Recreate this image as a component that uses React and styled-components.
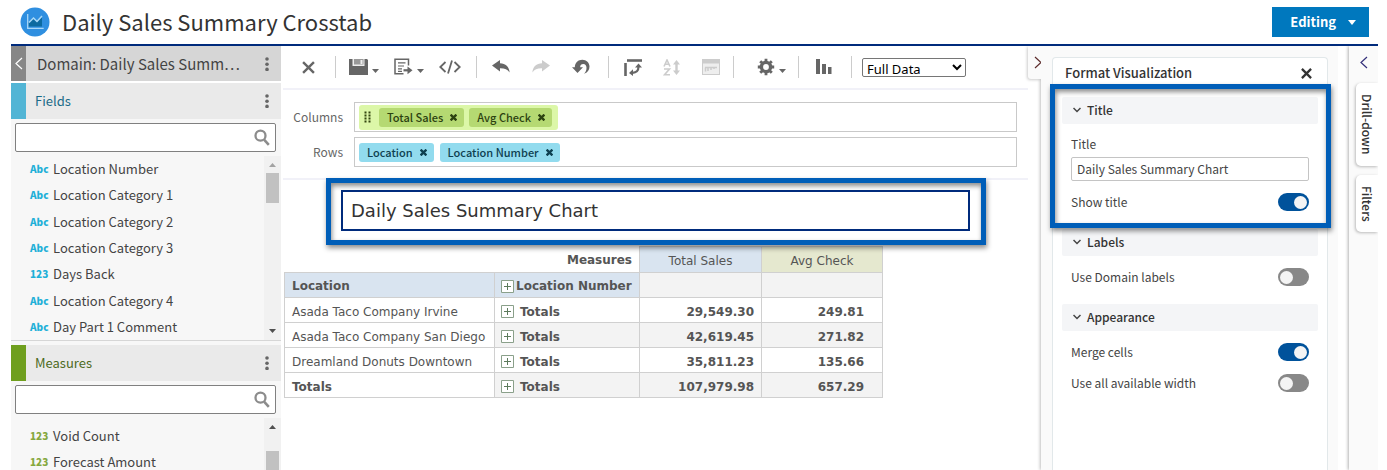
import React, { useState } from 'react';
import styled, { createGlobalStyle } from 'styled-components';

const fields = [
  { type: 'Abc', name: 'Location Number' },
  { type: 'Abc', name: 'Location Category 1' },
  { type: 'Abc', name: 'Location Category 2' },
  { type: 'Abc', name: 'Location Category 3' },
  { type: '123', name: 'Days Back' },
  { type: 'Abc', name: 'Location Category 4' },
  { type: 'Abc', name: 'Day Part 1 Comment' },
];

const measures = [
  { type: '123', name: 'Void Count' },
  { type: '123', name: 'Forecast Amount' },
];

const rows = [
  { location: 'Asada Taco Company Irvine', sales: '29,549.30', check: '249.81' },
  { location: 'Asada Taco Company San Diego', sales: '42,619.45', check: '271.82' },
  { location: 'Dreamland Donuts Downtown', sales: '35,811.23', check: '135.66' },
  { location: 'Totals', sales: '107,979.98', check: '657.29', total: true },
];

const LogoIcon = () => (
  <svg width="30" height="30" viewBox="0 0 30 30">
    <circle cx="15" cy="15" r="14.5" fill="#2f8fe0" />
    <path d="M8.500 19.500v-4l4.500-4 3.500 3.500 5.500-5v9.500z" fill="#0c6aa0" />
    <path d="M7.700 7v14.300h16" fill="none" stroke="#a9d8f7" strokeWidth="1.300" />
    <path d="M9 15.500l4.500-4.500 3.500 3.500 5-5.500" fill="none" stroke="#a9d8f7" strokeWidth="1.500" />
  </svg>
);

const Chevron = ({ left }) => (
  <svg width="8" height="13" viewBox="0 0 8 13" fill="none" stroke="currentColor" strokeWidth="1.200">
    <path d={left ? 'M7 1L1 6.500l6 5.500' : 'M1 1l6 5.500L1 12'} />
  </svg>
);

const DownChevron = () => (
  <svg width="8" height="6" viewBox="0 0 8 6" fill="none" stroke="#444" strokeWidth="1.500">
    <path d="M.5 1L4 4.500 7.500 1" />
  </svg>
);

const Dots = () => (
  <svg width="4" height="14" viewBox="0 0 4 14" fill="#666">
    <circle cx="2" cy="2" r="1.800" />
    <circle cx="2" cy="7.200" r="1.800" />
    <circle cx="2" cy="12.400" r="1.800" />
  </svg>
);

const SearchIcon = () => (
  <svg width="16" height="17" viewBox="0 0 16 17" fill="none" stroke="#8c8c8c">
    <circle cx="6.500" cy="6.700" r="5" strokeWidth="2.300" />
    <path d="M10.300 10.800l4.500 5" strokeWidth="2.600" />
  </svg>
);

const Caret = () => (
  <svg width="7" height="18" viewBox="0 0 7 18" fill="#666">
    <path d="M0 11h7L3.500 15z" />
  </svg>
);

const Arrow = ({ up, pale }) => (
  <svg width="7" height="4" viewBox="0 0 7 4" fill={pale ? '#a3a3a3' : '#505050'}>
    <path d={up ? 'M0 4h7L3.500 0z' : 'M0 0h7L3.500 4z'} />
  </svg>
);

const CloseIcon = ({ size = 12, weight = 2 }) => (
  <svg width={size} height={size} viewBox="0 0 12 12" stroke="currentColor" strokeWidth={weight}>
    <path d="M1 1l10 10M11 1L1 11" />
  </svg>
);

const SaveIcon = () => (
  <svg width="19" height="18" viewBox="0 0 19 18">
    <path d="M0 1h18l1 1v15H0z" fill="#666" />
    <path d="M3.500 1h12v7h-12z" fill="#eee" />
    <path d="M5 1h9.500v5.500H5z" fill="#999" />
    <path d="M11.500 2h2v4h-2z" fill="#eee" />
  </svg>
);

const ExportIcon = () => (
  <svg width="19" height="18" viewBox="0 0 19 18" fill="none" stroke="#666" strokeWidth="1.500">
    <path d="M14.500 7.500V1.300H1v14.500h8.500" />
    <path d="M4 4.800h7.500M4 8h6M4 10.800h4M4 13.300h4" strokeWidth="1.200" />
    <path d="M9.500 12.300h5" strokeWidth="2.200" />
    <path d="M13.500 8.500l5 3.800-5 3.900z" fill="#666" stroke="none" />
  </svg>
);

const CodeIcon = () => (
  <svg width="22" height="14" viewBox="0 0 22 14" fill="none" stroke="#666" strokeWidth="1.800">
    <path d="M6.500 2L1.300 7l5.200 5M15.500 2l5.200 5-5.200 5M13 .5L9 13.500" />
  </svg>
);

const UndoIcon = ({ flip }) => (
  <svg width="18" height="14" viewBox="0 0 18 14" fill={flip ? '#ccc' : '#666'}>
    <g transform={flip ? 'matrix(-1 0 0 1 18 0)' : undefined}>
      <path d="M0 5.500L8 0v3.200c5.500.2 9.300 3.500 9.600 9.300-2-3-5-4.300-9.600-4.200v3.200z" />
    </g>
  </svg>
);

const RevertIcon = () => (
  <svg width="18" height="16" viewBox="0 0 18 16" fill="#666">
    <path d="M0 8.300h2.800C3 3.500 6.300.8 10.300.8c4.200 0 7.200 3 7.200 6.800 0 3.500-2 6.200-5.500 7.200 1.800-1.600 2.500-3.600 2.500-6 0-2.700-1.300-3.900-3.200-3.900-2 0-3 .8-3.200 3.400H11L5.500 14z" />
  </svg>
);

const SwitchIcon = () => (
  <svg width="18" height="17" viewBox="0 0 18 17" fill="none" stroke="#666">
    <path d="M1.500 4v13" strokeWidth="2.600" />
    <path d="M3 1.500h15" strokeWidth="2.600" />
    <path d="M8 13.800c4.500.2 6.500-2 6.500-6.300" strokeWidth="2.200" />
    <path d="M11 8.500l3.500-4 3.500 4zM9 10.300l-4 3.700 4 3z" fill="#666" stroke="none" />
  </svg>
);

const SortIcon = () => (
  <svg width="18" height="17" viewBox="0 0 18 17" fill="none" stroke="#ccc" strokeWidth="1.600">
    <path d="M1 7.500L4 1l3 6.500M2 5.300h4M1 10h5.500L1.500 15.700H7" />
    <path d="M13.500 4v9" strokeWidth="2.400" />
    <path d="M10 5.500l3.500-4.500L17 5.500zM10 11.500l3.500 4.500 3.500-4.500z" fill="#ccc" stroke="none" />
  </svg>
);

const PanelIcon = () => (
  <svg width="18" height="16" viewBox="0 0 18 16" fill="none" stroke="#ccc">
    <rect x=".5" y=".5" width="17" height="15" strokeWidth="1" fill="#eee" />
    <path d="M0 2.500h18" strokeWidth="4" />
    <path d="M3.500 12.500V8.500M6 12V8.500M9 11V8.500M12 10V8.500M3 8.500h12" strokeWidth="1.500" />
  </svg>
);

const GearIcon = () => (
  <svg width="18" height="18" viewBox="0 0 18 18" fill="none" stroke="#666">
    <circle cx="9" cy="9" r="4.600" strokeWidth="3.400" />
    {[0, 45, 90, 135].map((deg) => (
      <path key={deg} d="M9 .8v3M9 14.200v3" strokeWidth="2.800" transform={`rotate(${deg} 9 9)`} />
    ))}
  </svg>
);

const BarsIcon = () => (
  <svg width="16" height="16" viewBox="0 0 16 16" fill="#666">
    <path d="M0 0h4v15H0zM6 5h4v10H6zM12 8h3.500v7H12z" />
  </svg>
);

const Grip = () => (
  <svg width="7" height="13" viewBox="0 0 7 13" fill="#33460f">
    {[0, 3, 6, 9].map((y) => (
      <path key={y} d={`M.5 ${y + 0.5}h2v2h-2zM4.500 ${y + 0.5}h2v2h-2z`} />
    ))}
  </svg>
);

const PlusBox = () => (
  <svg width="13" height="13" viewBox="0 0 13 13" fill="#fff" stroke="#8aa08a">
    <path d="M.5.5h12v12H.5z" />
    <path d="M6.500 3v7M3 6.500h7" stroke="#5c7a5c" />
  </svg>
);

function Switch({ label, on }) {
  const [checked, setChecked] = useState(on);
  return (
    <SwitchRow>
      <span>{label}</span>
      <Toggle type="checkbox" checked={checked} onChange={() => setChecked(!checked)} />
    </SwitchRow>
  );
}

function Search({ label }) {
  return (
    <SearchBox>
      <input type="text" aria-label={label} />
      <SearchIcon />
    </SearchBox>
  );
}

export default function App() {
  const [title, setTitle] = useState('Daily Sales Summary Chart');

  return (
    <Page>
      <GlobalStyle />
      <Header>
        <LogoIcon />
        <h1>Daily Sales Summary Crosstab</h1>
        <EditButton>
          Editing
          <svg width="8" height="5" viewBox="0 0 8 5" fill="#fff"><path d="M0 0h8L4 5z" /></svg>
        </EditButton>
      </Header>

      <Body>
        <Sidebar>
          <DomainHead>
            <Collapse><Chevron left /></Collapse>
            <h2>Domain: Daily Sales Summ…</h2>
            <MenuButton><Dots /></MenuButton>
          </DomainHead>
          <SectionHead $accent="#52b5d5" $color="#1b6b88">
            <h3>Fields</h3>
            <MenuButton><Dots /></MenuButton>
          </SectionHead>
          <Search label="Fields" />
          <ListArea $lined>
            <List>
              {fields.map((f) => (
                <li key={f.name}><Type $color="#1fb0d8">{f.type}</Type>{f.name}</li>
              ))}
            </List>
            <Scroll>
              <Arrow up pale />
              <Thumb $size="30px" />
              <Arrow />
            </Scroll>
          </ListArea>
          <SectionHead $accent="#6f9f1e" $color="#4d6b22">
            <h3>Measures</h3>
            <MenuButton><Dots /></MenuButton>
          </SectionHead>
          <Search label="Measures" />
          <ListArea $fill>
            <List>
              {measures.map((m) => (
                <li key={m.name}><Type $color="#86a83f">{m.type}</Type>{m.name}</li>
              ))}
            </List>
            <Scroll>
              <Arrow up />
              <Thumb $low $size="60px" />
            </Scroll>
          </ListArea>
        </Sidebar>

        <Main>
          <Toolbar>
            <Group $left="19px" $right="20px">
              <Tool><CloseIcon size={13} weight={2.2} /></Tool>
            </Group>
            <Group $left="13px" $right="15px" $gap="15px">
              <Tool><SaveIcon /><Caret /></Tool>
              <Tool><ExportIcon /><Caret /></Tool>
              <Tool><CodeIcon /></Tool>
            </Group>
            <Group $left="15px" $right="18px" $gap="22px">
              <Tool><UndoIcon /></Tool>
              <Tool disabled><UndoIcon flip /></Tool>
              <Tool><RevertIcon /></Tool>
            </Group>
            <Group $left="15px" $right="13px" $gap="21px">
              <Tool><SwitchIcon /></Tool>
              <Tool disabled><SortIcon /></Tool>
              <Tool disabled><PanelIcon /></Tool>
            </Group>
            <Group $left="23px" $right="12px">
              <Tool><GearIcon /><Caret /></Tool>
            </Group>
            <Group $left="17px" $right="19px">
              <Tool><BarsIcon /></Tool>
            </Group>
            <DataSelect aria-label="Full Data" defaultValue="Full Data">
              <option>Full Data</option>
            </DataSelect>
          </Toolbar>

          <Shelves>
            <Shelf>
              <ShelfLabel>Columns</ShelfLabel>
              <ShelfBox>
                <MeasureGroup>
                  <Grip />
                  <Chip $green>Total Sales <button><CloseIcon size={7} weight={4} /></button></Chip>
                  <Chip $green>Avg Check <button><CloseIcon size={7} weight={4} /></button></Chip>
                </MeasureGroup>
              </ShelfBox>
            </Shelf>
            <Shelf>
              <ShelfLabel>Rows</ShelfLabel>
              <ShelfBox>
                <Chip>Location <button><CloseIcon size={7} weight={4} /></button></Chip>
                <Chip>Location Number <button><CloseIcon size={7} weight={4} /></button></Chip>
              </ShelfBox>
            </Shelf>
          </Shelves>

          <ChartTitle>
            <h2>{title}</h2>
          </ChartTitle>

          <Crosstab>
            <colgroup>
              <col width="210" />
              <col width="145" />
              <col width="122" />
              <col width="121" />
            </colgroup>
            <thead>
              <tr>
                <Th colSpan={2} $bare>Measures</Th>
                <Th $tone="#d9e4f0" $plain>Total Sales</Th>
                <Th $tone="#e5e8cf" $plain>Avg Check</Th>
              </tr>
              <tr>
                <Th $tone="#d9e4f0">Location</Th>
                <Th $tone="#d9e4f0"><Expand $tight><PlusBox />Location Number</Expand></Th>
                <Td $shade />
                <Td $shade />
              </tr>
            </thead>
            <tbody>
              {rows.map((r, i) => (
                <tr key={r.location}>
                  <Td $bold={r.total}>{r.location}</Td>
                  <Td $bold $shade={i % 2 === 1}><Expand><PlusBox />Totals</Expand></Td>
                  <Td $bold $num $shade={i % 2 === 1}>{r.sales}</Td>
                  <Td $bold $num $wide $shade={i % 2 === 1}>{r.check}</Td>
                </tr>
              ))}
            </tbody>
          </Crosstab>
        </Main>

        <PanelTab><Chevron /></PanelTab>
        <FormatPanel>
          <Card>
            <CardHead>
              <h2>Format Visualization</h2>
              <button><CloseIcon size={11} weight={2.5} /></button>
            </CardHead>
            <Section $marked>
              <SectionTitle><DownChevron />Title</SectionTitle>
              <TitleField>
                Title
                <input type="text" value={title} onChange={(e) => setTitle(e.target.value)} />
              </TitleField>
              <Switch label="Show title" on />
            </Section>
            <Section>
              <SectionTitle><DownChevron />Labels</SectionTitle>
              <Options>
                <Switch label="Use Domain labels" on={false} />
              </Options>
            </Section>
            <Section>
              <SectionTitle><DownChevron />Appearance</SectionTitle>
              <Options>
                <Switch label="Merge cells" on />
                <Switch label="Use all available width" on={false} />
              </Options>
            </Section>
          </Card>
        </FormatPanel>

        <SideStrip>
          <StripToggle><Chevron left /></StripToggle>
          <SideTab>Drill-down</SideTab>
          <SideTab>Filters</SideTab>
        </SideStrip>
      </Body>
    </Page>
  );
}

const GlobalStyle = createGlobalStyle`
  * {
    box-sizing: border-box;
  }
  body {
    margin: 0;
    background: #fff;
    color: #444;
    font-family: "Noto Sans CJK SC", "Open Sans", sans-serif;
    font-size: 13px;
    line-height: 18px;
  }
  h1, h2, h3, ul {
    margin: 0;
    padding: 0;
    font-weight: 400;
    font-size: inherit;
  }
  button {
    display: flex;
    align-items: center;
    padding: 0;
    border: none;
    background: none;
    color: inherit;
    font: inherit;
    cursor: pointer;
  }
  input, select {
    font: inherit;
    color: inherit;
  }
  svg {
    flex: none;
    display: block;
  }
`;

const Page = styled.div`
  display: flex;
  flex-direction: column;
  height: 100vh;
  padding: 0 9px 0 11px;
  overflow: hidden;
`;

const Header = styled.header`
  display: flex;
  align-items: center;
  flex: none;
  height: 46px;
  padding: 0 9px;
  border-bottom: 2px solid #002b7c;
  h1 {
    flex: 1;
    margin-left: 12px;
    font-size: 22px;
    line-height: 28px;
    padding-bottom: 2px;
    color: #333;
  }
`;

const EditButton = styled.button`
  gap: 12px;
  height: 30px;
  padding: 0 13px 0 18px;
  background: #0078be;
  color: #fff;
  font-weight: 700;
`;

const Body = styled.div`
  display: flex;
  flex: 1;
  min-height: 0;
`;

const Sidebar = styled.aside`
  display: flex;
  flex-direction: column;
  flex: none;
  width: 270px;
  background: #f7f7f7;
`;

const DomainHead = styled.div`
  display: flex;
  align-items: center;
  flex: none;
  height: 37px;
  background: #d6d6d6;
  border-bottom: 2px solid #fff;
  h2 {
    flex: 1;
    padding-left: 11px;
    font-size: 15px;
    white-space: nowrap;
  }
`;

const Collapse = styled.button`
  justify-content: center;
  width: 15px;
  height: 100%;
  background: #878787;
  color: #fff;
`;

const MenuButton = styled.button`
  justify-content: center;
  width: 28px;
  height: 100%;
`;

const SectionHead = styled.div`
  display: flex;
  align-items: center;
  flex: none;
  height: 36px;
  background: #eaeaea;
  border-left: 15px solid ${(p) => p.$accent};
  color: ${(p) => p.$color};
  h3 {
    flex: 1;
    padding-left: 9px;
  }
`;

const SearchBox = styled.label`
  display: flex;
  align-items: center;
  flex: none;
  height: 29px;
  margin: 4px 5px 4px 4px;
  padding-right: 5px;
  border: 1px solid #808080;
  border-radius: 2px;
  background: #fff;
  input {
    flex: 1;
    min-width: 0;
    border: none;
    outline: none;
    background: none;
  }
`;

const List = styled.ul`
  display: flex;
  flex-direction: column;
  flex: 1;
  list-style: none;
  li {
    display: flex;
    align-items: center;
    white-space: nowrap;
  }
`;

const ListArea = styled.div`
  display: flex;
  flex: ${(p) => (p.$fill ? '1' : 'none')};
  min-height: 0;
  ${(p) => p.$lined && `
    height: 185px;
    margin-bottom: 4px;
    border-bottom: 1px solid #d6d6d6;
    li {
      flex: 1;
    }
  `}
  ${(p) => p.$fill && `
    ul {
      padding-top: 5px;
    }
    li {
      flex: none;
      height: 26px;
    }
  `}
`;

const Type = styled.span`
  width: 42px;
  padding-left: 19px;
  color: ${(p) => p.$color};
  font-size: 10px;
  font-weight: 900;
`;

const Scroll = styled.div`
  display: flex;
  flex-direction: column;
  align-items: center;
  justify-content: space-between;
  width: 17px;
  padding: 7px 0;
  background: #f1f1f1;
`;

const Thumb = styled.div`
  flex: none;
  width: 13px;
  height: ${(p) => p.$size};
  margin: ${(p) => (p.$low ? '22px 0 0' : '6px 0 auto')};
  background: #c1c1c1;
`;

const Main = styled.main`
  flex: 1;
  min-width: 0;
  padding-left: 2px;
`;

const Toolbar = styled.div`
  display: flex;
  align-items: center;
  height: 44px;
  border-bottom: 2px solid #f1f1f8;
`;

const Group = styled.div`
  display: flex;
  align-items: center;
  height: 22px;
  gap: ${(p) => p.$gap || '0'};
  padding: 0 ${(p) => p.$right} 0 ${(p) => p.$left};
  border-right: 1px solid #ccc;
`;

const Tool = styled.button`
  gap: 4px;
  color: #666;
`;

const DataSelect = styled.select`
  width: 104px;
  height: 19px;
  margin-left: 10px;
  border: 1px solid #767676;
  border-radius: 2px;
  background: #fff;
  color: #000;
  font-family: "Noto Sans", sans-serif;
`;

const Shelves = styled.div`
  display: flex;
  flex-direction: column;
  gap: 5px;
  padding: 12px 11px 11px 0;
  border-bottom: 2px solid #f1f1f8;
`;

const Shelf = styled.div`
  display: flex;
  align-items: center;
`;

const ShelfLabel = styled.span`
  width: 60px;
  margin-right: 11px;
  text-align: right;
  color: #666;
  font-size: 12px;
`;

const ShelfBox = styled.div`
  display: flex;
  align-items: center;
  flex: 1;
  gap: 6px;
  height: 30px;
  padding: 0 4px;
  border: 1px solid #c9c9c9;
`;

const MeasureGroup = styled.div`
  display: flex;
  align-items: center;
  gap: 5px;
  height: 25px;
  padding: 0 6px 0 5px;
  border-radius: 3px;
  background: #dcf7a8;
  > svg {
    margin-right: 3px;
  }
`;

const Chip = styled.div`
  display: flex;
  align-items: center;
  gap: 7px;
  height: 19px;
  padding: 0 7px 0 8px;
  border-radius: 3px;
  background: ${(p) => (p.$green ? '#b5d972' : '#92dbee')};
  color: ${(p) => (p.$green ? '#2c4210' : '#0e4050')};
  font-size: 11px;
  font-weight: 500;
  white-space: nowrap;
`;

/* blue callout frame, shared by the chart title and the title settings */
const frame = `
  border: 5px solid #005eb8;
  box-shadow: 1px 3px 5px rgba(0, 0, 0, 0.45), inset 1px 3px 5px rgba(0, 0, 0, 0.45);
`;

const ChartTitle = styled.div`
  position: relative;
  z-index: 1;
  margin: -2px 42px 1px 43px;
  padding: 7px 11px 9px 10px;
  ${frame}
  h2 {
    padding: 4px 8px;
    border: 2px solid #002b7c;
    color: #333;
    font-family: "DejaVu Sans", sans-serif;
    font-size: 18px;
    line-height: 29px;
  }
`;

const Crosstab = styled.table`
  width: 599px;
  margin-left: 1px;
  border-collapse: collapse;
  table-layout: fixed;
  font-family: "DejaVu Sans", sans-serif;
  font-size: 12px;
  color: #555;
  tr {
    height: 25px;
  }
  tr:first-child {
    height: 26px;
  }
  tbody tr:first-child {
    height: 25px;
  }
`;

const Th = styled.th`
  padding: 2px 7px 0;
  border: ${(p) => (p.$bare ? 'none' : '1px solid #d0d0d0')};
  background: ${(p) => p.$tone || 'none'};
  font-weight: ${(p) => (p.$plain ? '400' : '700')};
  text-align: ${(p) => (p.$bare ? 'right' : p.$plain ? 'center' : 'left')};
`;

const Td = styled.td`
  padding: 3px ${(p) => (p.$wide ? '18px' : '7px')} 0 7px;
  border: 1px solid #d0d0d0;
  background: ${(p) => (p.$shade ? '#f3f3f3' : '#fff')};
  font-weight: ${(p) => (p.$bold ? '700' : '400')};
  text-align: ${(p) => (p.$num ? 'right' : 'left')};
  white-space: nowrap;
`;

const Expand = styled.span`
  display: flex;
  align-items: center;
  gap: ${(p) => (p.$tight ? '2px' : '6px')};
  margin-left: -1px;
  white-space: nowrap;
`;

const PanelTab = styled.button`
  position: relative;
  z-index: 1;
  align-self: flex-start;
  justify-content: center;
  flex: none;
  width: 13px;
  height: 33px;
  padding-left: 7px;
  border-radius: 0 0 0 3px;
  background: #fafafa;
  box-shadow: -1px 1px 3px rgba(0, 0, 0, 0.2);
  clip-path: inset(0 0 -4px -4px);
  color: #5c2a2a;
`;

const FormatPanel = styled.aside`
  display: flex;
  flex: none;
  width: 297px;
  padding: 11px 10px 0 11px;
  background: #fafafa;
  box-shadow: -1px 0 3px rgba(0, 0, 0, 0.25);
  clip-path: inset(0 0 0 -4px);
`;

const Card = styled.div`
  flex: 1;
  padding: 0 9px;
  border: 1px solid #e2e8ea;
  border-bottom: none;
  border-radius: 4px 4px 0 0;
  background: #fff;
`;

const CardHead = styled.div`
  display: flex;
  align-items: center;
  justify-content: space-between;
  height: 30px;
  padding: 0 6px 0 3px;
  color: #333;
  h2 {
    font-weight: 500;
  }
`;

const Section = styled.section`
  position: relative;
  padding: ${(p) => (p.$marked ? '9px 0 18px' : '0 0 18px')};
  font-size: 12px;
  ${(p) => p.$marked && `
    &::after {
      content: '';
      position: absolute;
      inset: -4px -13px 1px -12px;
      z-index: 1;
      pointer-events: none;
      ${frame}
    }
  `}
`;

const SectionTitle = styled.h3`
  display: flex;
  align-items: center;
  gap: 6px;
  height: 27px;
  padding: 0 0 1px 11px;
  border-radius: 2px;
  background: #f4f5f7;
  color: #333;
  font-weight: 500;
`;

const TitleField = styled.label`
  display: flex;
  flex-direction: column;
  gap: 4px;
  padding: 11px 9px 12px;
  input {
    height: 24px;
    padding: 0 5px 1px;
    border: 1px solid #c4c4c4;
    border-radius: 2px;
  }
`;

const Options = styled.div`
  display: flex;
  flex-direction: column;
  gap: 13px;
  padding-top: 12px;
`;

const SwitchRow = styled.label`
  display: flex;
  align-items: center;
  justify-content: space-between;
  padding: 0 9px;
`;

const Toggle = styled.input`
  appearance: none;
  display: flex;
  align-items: center;
  width: 31px;
  height: 18px;
  margin: 0;
  padding: 0 2px;
  border-radius: 9px;
  background: #888;
  &::before {
    content: '';
    width: 13px;
    height: 13px;
    border-radius: 50%;
    background: #f4f4f4;
  }
  &:checked {
    justify-content: flex-end;
    background: #00529b;
  }
`;

const SideStrip = styled.nav`
  display: flex;
  flex-direction: column;
  align-items: flex-end;
  gap: 9px;
  flex: none;
  width: 29px;
  margin-left: 11px;
  background: #fafafa;
  box-shadow: -1px 0 3px rgba(0, 0, 0, 0.3);
  clip-path: inset(0 0 0 -4px);
`;

const StripToggle = styled.button`
  justify-content: center;
  width: 100%;
  height: 28px;
  padding-top: 5px;
  color: #33307a;
`;

const SideTab = styled.button`
  justify-content: center;
  width: 22px;
  padding: 11px 0;
  border-radius: 5px 0 0 5px;
  background: #fff;
  box-shadow: -1px 1px 3px rgba(0, 0, 0, 0.25);
  color: #333;
  font-size: 12px;
  font-weight: 500;
  line-height: 22px;
  writing-mode: vertical-rl;
`;
